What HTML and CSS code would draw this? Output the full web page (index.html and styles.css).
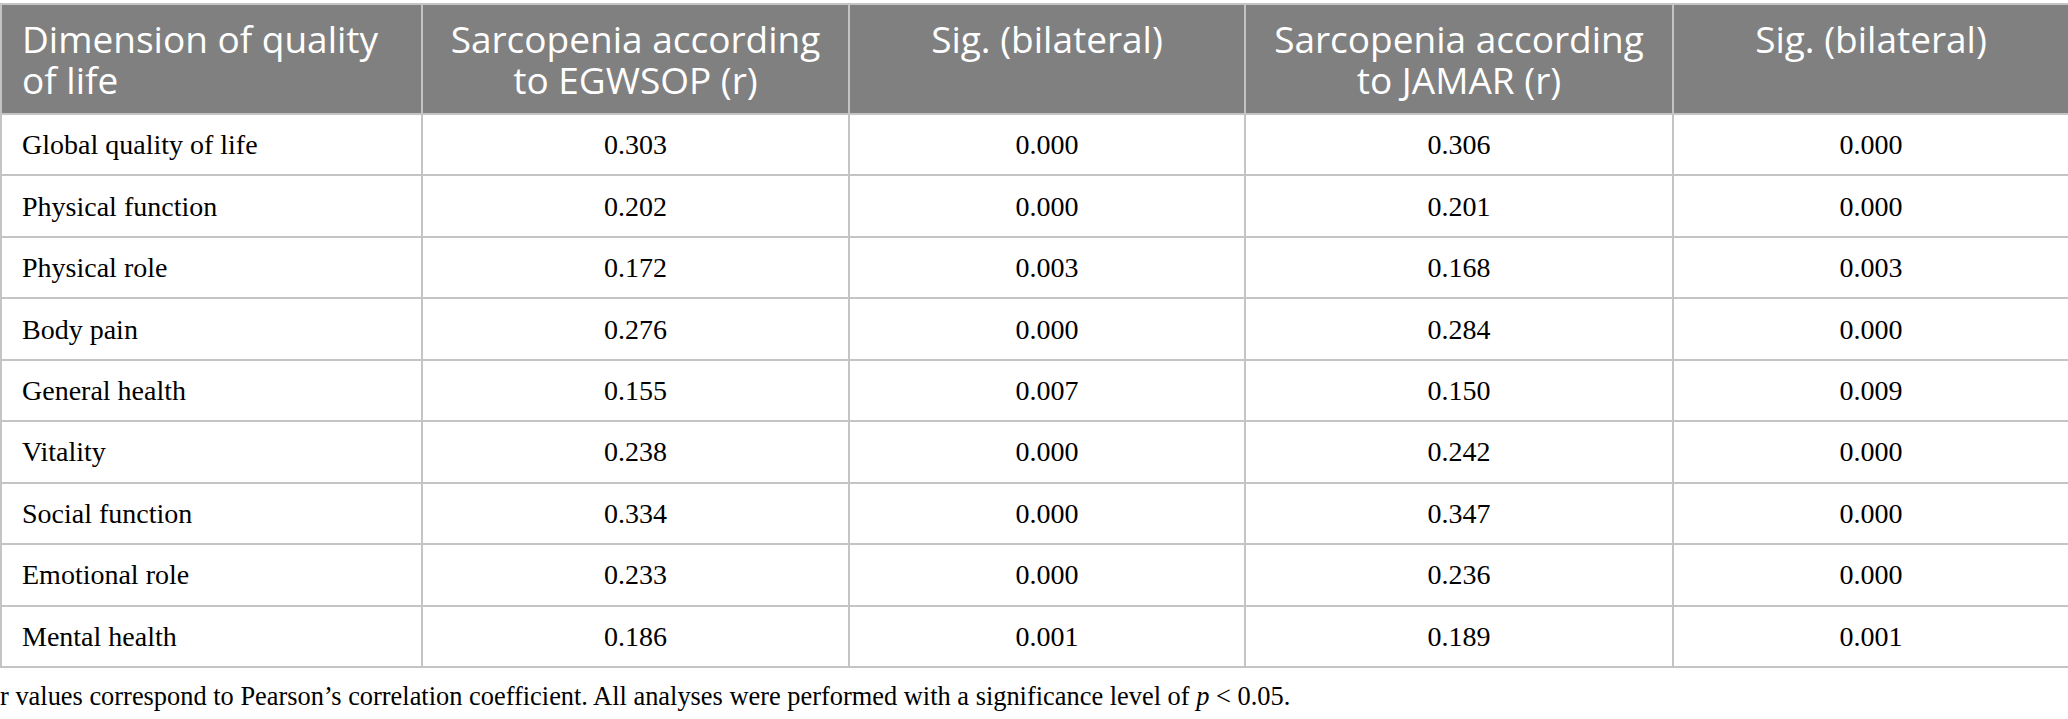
FILE: index.html
```html
<!DOCTYPE html>
<html>
<head>
<meta charset="utf-8">
<link rel="stylesheet" href="styles.css">
</head>
<body>
<div class="wrap">
<table class="tbl">
  <colgroup>
    <col class="c1"><col class="c2"><col class="c3"><col class="c4"><col class="c5">
  </colgroup>
  <thead>
    <tr>
      <th class="left">Dimension of quality of life</th>
      <th>Sarcopenia according to EGWSOP (r)</th>
      <th>Sig. (bilateral)</th>
      <th>Sarcopenia according to JAMAR (r)</th>
      <th>Sig. (bilateral)</th>
    </tr>
  </thead>
  <tbody>
    <tr><td class="left">Global quality of life</td><td>0.303</td><td>0.000</td><td>0.306</td><td>0.000</td></tr>
    <tr><td class="left">Physical function</td><td>0.202</td><td>0.000</td><td>0.201</td><td>0.000</td></tr>
    <tr><td class="left">Physical role</td><td>0.172</td><td>0.003</td><td>0.168</td><td>0.003</td></tr>
    <tr><td class="left">Body pain</td><td>0.276</td><td>0.000</td><td>0.284</td><td>0.000</td></tr>
    <tr><td class="left">General health</td><td>0.155</td><td>0.007</td><td>0.150</td><td>0.009</td></tr>
    <tr><td class="left">Vitality</td><td>0.238</td><td>0.000</td><td>0.242</td><td>0.000</td></tr>
    <tr><td class="left">Social function</td><td>0.334</td><td>0.000</td><td>0.347</td><td>0.000</td></tr>
    <tr><td class="left">Emotional role</td><td>0.233</td><td>0.000</td><td>0.236</td><td>0.000</td></tr>
    <tr><td class="left">Mental health</td><td>0.186</td><td>0.001</td><td>0.189</td><td>0.001</td></tr>
  </tbody>
</table>
<p class="note">r values correspond to Pearson’s correlation coefficient. All analyses were performed with a significance level of <i>p</i> &lt; 0.05.</p>
</div>
</body>
</html>
```

FILE: styles.css
```css
html, body {
  margin: 0;
  padding: 0;
  background: #ffffff;
}
.wrap {
  padding-top: 3px;
}
.tbl {
  border-collapse: collapse;
  table-layout: fixed;
  width: 2068px;
}
.c1 { width: 421px; }
.c2 { width: 427px; }
.c3 { width: 396px; }
.c4 { width: 428px; }
.c5 { width: 396px; }
.tbl th {
  background: #808080;
  color: #ffffff;
  font-family: "Open Sans", "Noto Sans", sans-serif;
  font-weight: normal;
  font-size: 37px;
  line-height: 41px;
  padding: 13px 20px 13px;
  vertical-align: top;
  text-align: center;
  border: 2px solid #c4c4c4;
  height: 82px;
}
.tbl td {
  font-family: "Liberation Serif", "Times New Roman", serif;
  font-size: 28px;
  line-height: 33px;
  color: #000000;
  text-align: center;
  vertical-align: middle;
  padding: 13.22px 20px;
  height: 33px;
  border: 2px solid #c4c4c4;
}
.tbl .left {
  text-align: left;
}
.note {
  margin: 12px 0 0 0;
  font-family: "Liberation Serif", "Times New Roman", serif;
  font-size: 26.4px;
  line-height: 32px;
  color: #000000;
}
```
